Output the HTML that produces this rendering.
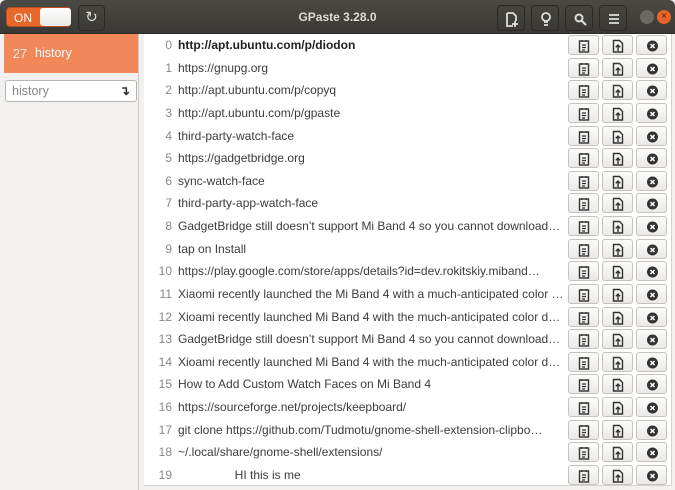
<!DOCTYPE html>
<html><head><meta charset="utf-8"><style>
*{box-sizing:border-box;margin:0;padding:0}
body{width:675px;height:490px;overflow:hidden;background:#f2f1f0;font-family:"Liberation Sans",sans-serif;position:relative}
.hdr{position:absolute;left:0;top:0;width:675px;height:34px;background:linear-gradient(#4a4944,#3a3935);border-bottom:1px solid #2b2a27;border-radius:6px 6px 0 0}
.tb{position:absolute;top:5px;height:26px;border:1px solid #2a2926;border-radius:4px;background:linear-gradient(#45443f,#3b3a36)}
.sw{position:absolute;left:6px;top:7px;width:65px;height:20px;border-radius:4px;background:#e8672a;border:1px solid #b94f1f}
.sw span{position:absolute;left:7px;top:3px;color:#fff;font-size:12px}
.knob{position:absolute;left:33px;top:0;width:31px;height:18px;background:linear-gradient(#fff,#e8e8e6);border-radius:3px}
.title{position:absolute;left:0;width:675px;top:10px;text-align:center;color:#dfdbd2;font-weight:bold;font-size:12px}
.side{position:absolute;left:0;top:34px;width:139px;height:456px;background:#f2f1f0;border-right:1px solid #cfcdc9}
.sel{position:absolute;left:4px;top:0;width:134px;height:39px;background:#f2875a;color:#fff;font-size:12.5px}
.sel .n{position:absolute;left:9px;top:13px;opacity:.85}
.sel .t{position:absolute;left:31px;top:12px}
.search{position:absolute;left:5px;top:46px;width:132px;height:22px;border:1px solid #b8b5b0;border-radius:3px;background:#fff;font-size:12.5px;color:#888;padding:3px 6px}
.list{position:absolute;left:144px;top:34px;width:528px;height:452px;background:#fff;border-right:1px solid #d6d4d0;border-bottom:1px solid #d6d4d0}
.row{position:absolute;left:0;height:22.6px;width:528px;font-size:12px;color:#3c3c3c}
.row .i{position:absolute;right:500px;top:4px;color:#888;font-size:12px}
.row .x{position:absolute;left:34px;top:4px;white-space:nowrap;max-width:388px;overflow:hidden;text-overflow:ellipsis}
.b{position:absolute;top:1px;width:31px;height:20px;border:1px solid #c6c3be;border-radius:3px;background:linear-gradient(#fbfbfa,#ebeae8)}
.b svg{position:absolute;left:9px;top:3px}
</style></head><body>
<div class="hdr">
<div class="sw"><span>ON</span><div class="knob"></div></div>
<div class="tb" style="left:78px;width:27px;color:#ddd;font-size:15px;text-align:center;line-height:24px">&#x21bb;</div>
<div class="title">GPaste 3.28.0</div>
<div class="tb" style="left:497px;width:28px"><svg width="28" height="26"><path d="M9 7h6l3 3v5M9 7v13h6M17 15v6M14 18h6" stroke="#ddd" stroke-width="1.8" fill="none"/></svg></div>
<div class="tb" style="left:531px;width:28px"><svg width="28" height="26"><circle cx="14" cy="11" r="4" stroke="#ddd" stroke-width="1.8" fill="none"/><path d="M12 16h4M12 19h4" stroke="#ddd" stroke-width="1.8"/></svg></div>
<div class="tb" style="left:565px;width:28px"><svg width="28" height="26"><circle cx="13" cy="12" r="3.5" stroke="#ddd" stroke-width="2" fill="none"/><path d="M16 15l4 4" stroke="#ddd" stroke-width="2.2"/></svg></div>
<div class="tb" style="left:599px;width:28px"><svg width="28" height="26"><path d="M9 9h10M9 13h10M9 17h10" stroke="#ddd" stroke-width="1.8"/></svg></div>
<div style="position:absolute;left:640px;top:10px;width:14px;height:14px;border-radius:7px;background:#6a6964"></div>
<div style="position:absolute;left:657px;top:10px;width:14px;height:14px;border-radius:7px;background:#e9622b;color:#4a2010;font-size:10px;text-align:center;line-height:14px">×</div>
</div>
<div class="side">
<div class="sel"><span class="n">27</span><span class="t">history</span></div>
<div class="search">history<span style="position:absolute;right:6px;top:2px;color:#333;font-weight:bold">&#x21b4;</span></div>
</div>
<div class="list" id="L"></div>
<script>
var t=["http://apt.ubuntu.com/p/diodon","https://gnupg.org","http://apt.ubuntu.com/p/copyq","http://apt.ubuntu.com/p/gpaste","third-party-watch-face","https://gadgetbridge.org","sync-watch-face","third-party-app-watch-face","GadgetBridge still doesn’t support Mi Band 4 so you cannot download…","tap on Install","https://play.google.com/store/apps/details?id=dev.rokitskiy.miband…","Xiaomi recently launched the Mi Band 4 with a much-anticipated color …","Xioami recently launched Mi Band 4 with the much-anticipated color d…","GadgetBridge still doesn’t support Mi Band 4 so you cannot download…","Xioami recently launched Mi Band 4 with the much-anticipated color d…","How to Add Custom Watch Faces on Mi Band 4","https://sourceforge.net/projects/keepboard/","git clone https://github.com/Tudmotu/gnome-shell-extension-clipbo…","~/.local/share/gnome-shell/extensions/","                 HI this is me"];
var c='<svg width="12" height="14"><rect x="1.5" y="2" width="9" height="11" fill="none" stroke="#333" stroke-width="1.4"/><path d="M4 1v2M8 1v2M4 6h4M4 8.5h4M4 11h3" stroke="#333" stroke-width="1.2"/></svg>';
var u='<svg width="12" height="14"><path d="M1.5 1.5h6l3 3v8.5h-9z" fill="none" stroke="#333" stroke-width="1.4"/><path d="M6 12V6M3.8 8.3L6 6l2.2 2.3" stroke="#333" stroke-width="1.4" fill="none"/></svg>';
var d='<svg width="14" height="14"><circle cx="6.5" cy="7" r="5.5" fill="#333"/><path d="M4.5 5l4 4M8.5 5l-4 4" stroke="#fff" stroke-width="1.5"/></svg>';
var h='';
t.forEach(function(s,i){h+='<div class="row" style="top:'+(i*22.63)+'px"><span class="i">'+i+'</span><span class="x" style="'+(i==0?'font-weight:bold;color:#222':'')+'">'+s.replace(/ /g,i==19?'&nbsp;':' ')+'</span><div class="b" style="left:424px">'+c+'</div><div class="b" style="left:458px">'+u+'</div><div class="b" style="left:492px">'+d+'</div></div>';});
document.getElementById('L').innerHTML=h;
</script>
</body></html>
